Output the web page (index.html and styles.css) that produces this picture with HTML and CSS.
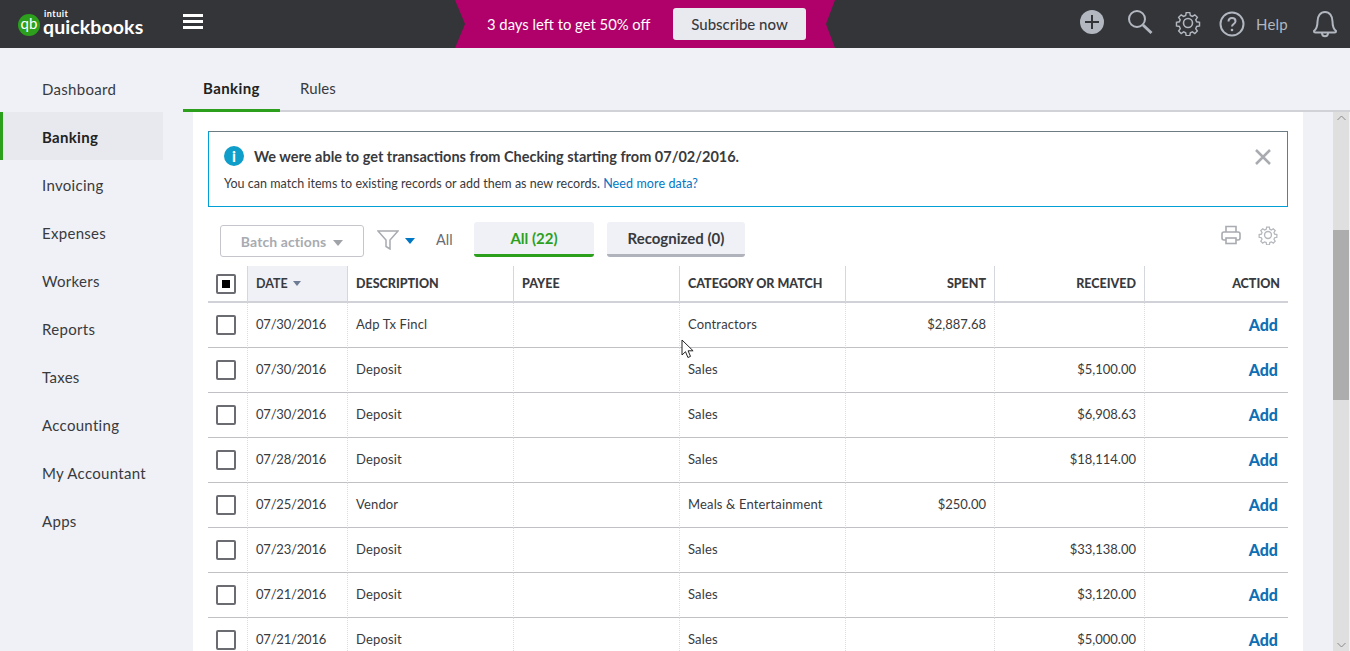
FILE: index.html
```html
<!DOCTYPE html>
<html>
<head>
    <title>Banking</title>
    <link rel="stylesheet" href="styles.css">
</head>
<body>
    <header class="topbar">
        <div class="logo">
            <span class="logo-badge">qb</span>
            <div class="logo-words">
                <span class="logo-intuit">intuit</span>
                <span class="logo-name">quickbooks</span>
            </div>
        </div>
        <div class="hamburger"><span></span><span></span><span></span></div>
        <div class="promo">
            <span class="promo-text">3 days left to get 50% off</span>
            <button class="subscribe">Subscribe now</button>
        </div>
        <div class="top-icons">
            <svg class="icon-plus" width="26" height="26" viewBox="0 0 26 26"><circle cx="13" cy="13" r="12" fill="#b2b7c0"/><path d="M13 6v14M6 13h14" stroke="#333539" stroke-width="2"/></svg>
            <svg class="icon-search" width="26" height="26" viewBox="0 0 26 26" fill="none" stroke="#b2b7c0"><circle cx="10" cy="10" r="8" stroke-width="2"/><path d="M16 16l8.500 8" stroke-width="3"/></svg>
            <svg class="icon-gear" width="26" height="26" viewBox="0 0 26 26" fill="none" stroke="#b2b7c0" stroke-width="1.600"><path d="M11 1.500h4l.6 3.200 2.300 1 2.700-1.800 2.800 2.800-1.800 2.700 1 2.300 3.200.6v4l-3.200.6-1 2.300 1.800 2.700-2.800 2.800-2.700-1.800-2.300 1-.6 3.200h-4l-.6-3.200-2.300-1-2.700 1.800-2.800-2.800 1.800-2.700-1-2.300-3.200-.6v-4l3.200-.6 1-2.300-1.800-2.700 2.800-2.800 2.700 1.800 2.300-1z" transform="translate(1.300 1.300) scale(.9)"/><circle cx="13" cy="13" r="4.500"/></svg>
            <svg class="icon-help" width="26" height="26" viewBox="0 0 26 26" fill="none" stroke="#b2b7c0"><circle cx="13" cy="13" r="11.500" stroke-width="2"/><path d="M9.500 10.500c0-2.200 1.500-3.500 3.500-3.500s3.500 1.300 3.500 3.200c0 2.800-3.500 2.800-3.500 5.300" stroke-width="2"/><circle cx="13" cy="19" r="1.300" fill="#b2b7c0" stroke="none"/></svg>
            <span class="help-label">Help</span>
            <svg class="icon-bell" width="26" height="28" viewBox="0 0 26 28" fill="none" stroke="#b2b7c0" stroke-width="2"><path d="M2 21c3-2.500 3.500-5 3.500-9.500C5.500 6 8.500 2 13 2s7.500 4 7.500 9.500c0 4.500.5 7 3.500 9.500 0 1-.5 1.500-1.500 1.500h-19C2.500 22.500 2 22 2 21z"/><path d="M10 23c0 2 1.300 3.200 3 3.200s3-1.200 3-3.200"/></svg>
        </div>
    </header>

    <div class="layout">
        <nav class="sidebar">
            <a class="nav-item">Dashboard</a>
            <a class="nav-item active">Banking</a>
            <a class="nav-item">Invoicing</a>
            <a class="nav-item">Expenses</a>
            <a class="nav-item">Workers</a>
            <a class="nav-item">Reports</a>
            <a class="nav-item">Taxes</a>
            <a class="nav-item">Accounting</a>
            <a class="nav-item">My Accountant</a>
            <a class="nav-item">Apps</a>
        </nav>

        <main class="main">
            <div class="page-tabs">
                <a class="page-tab active">Banking</a>
                <a class="page-tab">Rules</a>
            </div>
            <div class="scroll-area">
                <div class="panel">
                    <div class="notice">
                        <div class="notice-title">
                            <span class="info-icon">i</span>
                            <span>We were able to get transactions from Checking starting from 07/02/2016.</span>
                        </div>
                        <p class="notice-body">You can match items to existing records or add them as new records. <a class="link">Need more data?</a></p>
                        <svg class="notice-close" width="18" height="18" viewBox="0 0 18 18"><path d="M2 2l14 14M16 2L2 16" stroke="#a8abb0" stroke-width="2.500"/></svg>
                    </div>

                    <div class="toolbar">
                        <button class="batch">Batch actions <span class="caret-grey"></span></button>
                        <svg class="filter-icon" width="22" height="20" viewBox="0 0 22 20" fill="none"><path d="M1 1h20l-8 9v9l-4-2.500V10z" stroke="#a8abb0" stroke-width="1.500"/></svg>
                        <span class="caret-blue"></span>
                        <span class="filter-all">All</span>
                        <button class="sub-tab active">All (22)</button>
                        <button class="sub-tab sub-tab-wide">Recognized (0)</button>
                        <div class="tool-icons">
                            <svg width="20" height="20" viewBox="0 0 20 20" fill="none" stroke="#a8abb0" stroke-width="1.600"><path d="M5 7V1.500h10V7"/><rect x="1" y="7" width="18" height="8" rx="2"/><rect x="5" y="13" width="10" height="5.500" fill="#fff"/></svg>
                            <svg width="20" height="20" viewBox="0 0 26 26" fill="none" stroke="#b4b7bc" stroke-width="1.800"><path d="M11 1.500h4l.6 3.200 2.300 1 2.700-1.800 2.800 2.800-1.800 2.700 1 2.300 3.200.6v4l-3.200.6-1 2.300 1.800 2.700-2.800 2.800-2.700-1.800-2.300 1-.6 3.200h-4l-.6-3.200-2.300-1-2.700 1.800-2.800-2.800 1.800-2.700-1-2.300-3.200-.6v-4l3.200-.6 1-2.300-1.800-2.700 2.800-2.800 2.700 1.800 2.300-1z" transform="translate(1.300 1.300) scale(.9)"/><circle cx="13" cy="13" r="4.500"/></svg>
                        </div>
                    </div>

                    <table class="txn-table">
                        <colgroup>
                            <col class="col-check"><col class="col-date"><col class="col-text"><col class="col-text"><col class="col-text"><col class="col-spent"><col class="col-received"><col class="col-action">
                        </colgroup>
                        <thead>
                            <tr>
                                <th><span class="check check-some"></span></th>
                                <th class="sorted">DATE <span class="caret-sort"></span></th>
                                <th>DESCRIPTION</th>
                                <th>PAYEE</th>
                                <th>CATEGORY OR MATCH</th>
                                <th class="num">SPENT</th>
                                <th class="num">RECEIVED</th>
                                <th class="num">ACTION</th>
                            </tr>
                        </thead>
                        <tbody>
                            <tr><td><span class="check"></span></td><td class="date">07/30/2016</td><td>Adp Tx Fincl</td><td></td><td>Contractors</td><td class="num">$2,887.68</td><td class="num"></td><td class="num"><a class="add">Add</a></td></tr>
                            <tr><td><span class="check"></span></td><td class="date">07/30/2016</td><td>Deposit</td><td></td><td>Sales</td><td class="num"></td><td class="num">$5,100.00</td><td class="num"><a class="add">Add</a></td></tr>
                            <tr><td><span class="check"></span></td><td class="date">07/30/2016</td><td>Deposit</td><td></td><td>Sales</td><td class="num"></td><td class="num">$6,908.63</td><td class="num"><a class="add">Add</a></td></tr>
                            <tr><td><span class="check"></span></td><td class="date">07/28/2016</td><td>Deposit</td><td></td><td>Sales</td><td class="num"></td><td class="num">$18,114.00</td><td class="num"><a class="add">Add</a></td></tr>
                            <tr><td><span class="check"></span></td><td class="date">07/25/2016</td><td>Vendor</td><td></td><td>Meals &amp; Entertainment</td><td class="num">$250.00</td><td class="num"></td><td class="num"><a class="add">Add</a></td></tr>
                            <tr><td><span class="check"></span></td><td class="date">07/23/2016</td><td>Deposit</td><td></td><td>Sales</td><td class="num"></td><td class="num">$33,138.00</td><td class="num"><a class="add">Add</a></td></tr>
                            <tr><td><span class="check"></span></td><td class="date">07/21/2016</td><td>Deposit</td><td></td><td>Sales</td><td class="num"></td><td class="num">$3,120.00</td><td class="num"><a class="add">Add</a></td></tr>
                            <tr><td><span class="check"></span></td><td class="date">07/21/2016</td><td>Deposit</td><td></td><td>Sales</td><td class="num"></td><td class="num">$5,000.00</td><td class="num"><a class="add">Add</a></td></tr>
                        </tbody>
                    </table>
                </div>
                <div class="scrollbar">
                    <svg class="arrow" width="17" height="12" viewBox="0 0 17 12"><path d="M4.500 8l4-4 4 4" fill="none" stroke="#8a8a8a" stroke-width="1"/></svg>
                    <div class="thumb"></div>
                    <svg class="arrow arrow-down" width="17" height="12" viewBox="0 0 17 12"><path d="M4.500 4l4 4 4-4" fill="none" stroke="#8a8a8a" stroke-width="1"/></svg>
                </div>
            </div>
        </main>
    </div>

    <svg class="cursor" width="14" height="20" viewBox="0 0 14 20"><path d="M1 1v15l3.500-3.300 2.400 5.800 2.600-1.100-2.400-5.600h5z" fill="#fff" stroke="#222" stroke-width="1"/></svg>
</body>
</html>
```

FILE: styles.css
```css
* {
    box-sizing: border-box;
}
html, body {
    height: 100%;
}
body {
    margin: 0;
    height: 651px;
    overflow: hidden;
    background-color: #eff1f6;
    color: #393a3d;
    font-family: "Lato", "Open Sans", sans-serif;
    font-size: 14px;
}
button {
    font-family: inherit;
}

/* top bar */
.topbar {
    display: flex;
    align-items: center;
    height: 48px;
    background-color: #333539;
    color: #fff;
}
.logo {
    display: flex;
    align-items: center;
    width: 183px;
    padding-left: 18px;
    flex-shrink: 0;
}
.logo-badge {
    width: 22px;
    height: 22px;
    margin-top: 2px;
    border-radius: 50%;
    background-color: #2ca01c;
    color: #fff;
    font-size: 15px;
    line-height: 19px;
    text-align: center;
    margin-right: 3px;
}
.logo-words {
    display: flex;
    flex-direction: column;
    margin-top: -3px;
}
.logo-intuit {
    font-size: 9px;
    line-height: 7px;
    font-weight: 700;
    margin-left: 1px;
    letter-spacing: .5px;
}
.logo-name {
    font-size: 19.500px;
    line-height: 19px;
    font-weight: 700;
    letter-spacing: .1px;
}
.hamburger {
    display: flex;
    flex-direction: column;
    gap: 3px;
    width: 20px;
    margin-top: -5px;
}
.hamburger span {
    display: block;
    height: 3px;
    background-color: #fff;
}
.promo {
    display: flex;
    align-items: center;
    width: 380px;
    height: 48px;
    margin-left: 252px;
    padding-left: 32px;
    background-color: #b0006a;
    clip-path: polygon(0 0, 100% 0, 371px 50%, 100% 100%, 0 100%, 10px 50%);
}
.promo-text {
    font-size: 14.800px;
    width: 186px;
    color: #fff;
    margin-top: -1px;
}
.subscribe {
    width: 133px;
    height: 32px;
    border: 0;
    border-radius: 3px;
    background-color: #e9eaef;
    color: #393a3d;
    font-size: 15px;
    font-weight: 500;
}
.top-icons {
    display: flex;
    align-items: center;
    margin-left: 244px;
}
.icon-plus {
    margin-top: -4px;
}
.icon-search {
    margin: -4px 0 0 22px;
}
.icon-gear {
    margin: -3px 0 0 22px;
}
.icon-help {
    margin: 0 0 0 18px;
}
.help-label {
    color: #b2b7c0;
    font-size: 15px;
    margin: -1px 0 0 11px;
    width: 45px;
    letter-spacing: .2px;
}
.icon-bell {
    margin: 0 0 0 11px;
}

/* sidebar */
.layout {
    display: flex;
    height: 603px;
}
.sidebar {
    width: 183px;
    padding-top: 16px;
    flex-shrink: 0;
}
.nav-item {
    display: block;
    width: 163px;
    height: 48px;
    padding-left: 42px;
    line-height: 50px;
    font-size: 15px;
    letter-spacing: .3px;
}
.nav-item.active {
    padding-left: 39px;
    border-left: 3px solid #2ca01c;
    background-color: #e8e9ee;
    font-weight: 700;
    color: #222;
}

/* main */
.main {
    flex: 1;
    display: flex;
    flex-direction: column;
    min-width: 0;
}
.page-tabs {
    display: flex;
    height: 64px;
    border-bottom: 2px solid #d0d2d8;
}
.page-tab {
    height: 64px;
    padding: 31px 20px 0;
    font-size: 15px;
    letter-spacing: .1px;
}
.page-tab.active {
    width: 97px;
    border-bottom: 3px solid #2ca01c;
    font-weight: 700;
    color: #222;
    letter-spacing: .4px;
}
.scroll-area {
    flex: 1;
    display: flex;
    min-height: 0;
    padding-left: 10px;
}
.panel {
    width: 1110px;
    padding: 19px 15px 0;
    background-color: #fff;
    overflow: hidden;
}
.scrollbar {
    display: flex;
    flex-direction: column;
    width: 16px;
    margin-left: 30px;
    background-color: #dfdfdf;
    position: relative;
}
.arrow {
    flex-shrink: 0;
}
.arrow-down {
    margin-top: auto;
}
.thumb {
    position: absolute;
    top: 118px;
    left: 0;
    width: 100%;
    height: 170px;
    background-color: #adadad;
}

/* notice */
.notice {
    position: relative;
    height: 76px;
    padding: 14px 15px 0;
    border: 1px solid #00a0d6;
    border-top-color: #6d7b82;
}
.notice-title {
    display: flex;
    align-items: center;
    font-size: 14.500px;
    font-weight: 700;
}
.info-icon {
    width: 20px;
    height: 20px;
    margin-right: 10px;
    border-radius: 50%;
    background-color: #0f9dc9;
    color: #fff;
    font-size: 15px;
    font-weight: 900;
    line-height: 20px;
    text-align: center;
}
.notice-body {
    margin: 10px 0 0;
    font-size: 12.500px;
    letter-spacing: .03px;
}
.link {
    color: #0077c5;
    letter-spacing: .1px;
}
.notice-close {
    position: absolute;
    top: 16px;
    right: 15px;
}

/* toolbar above table */
.toolbar {
    display: flex;
    align-items: center;
    height: 35px;
    margin-top: 15px;
    padding-left: 12px;
}
.batch {
    display: flex;
    align-items: center;
    justify-content: center;
    width: 144px;
    height: 32px;
    margin-top: 2px;
    padding: 2px 0 0;
    background-color: #fff;
    border: 1px solid #c4c6cc;
    border-radius: 3px;
    color: #a8abb0;
    font-size: 14px;
    font-weight: 700;
    letter-spacing: .1px;
}
.caret-grey {
    width: 0;
    height: 0;
    margin-left: 7px;
    margin-top: 3px;
    border-left: 5px solid transparent;
    border-right: 5px solid transparent;
    border-top: 6px solid #a0a3a8;
}
.filter-icon {
    margin-left: 13px;
}
.caret-blue {
    width: 0;
    height: 0;
    margin-left: 6px;
    margin-top: 3px;
    border-left: 5px solid transparent;
    border-right: 5px solid transparent;
    border-top: 6px solid #0077c5;
}
.filter-all {
    width: 59px;
    padding-left: 21px;
    color: #6b6c72;
    font-size: 14.500px;
}
.sub-tab {
    width: 120px;
    height: 35px;
    margin-right: 13px;
    padding: 0;
    border: 0;
    border-bottom: 3px solid #b0b3bc;
    border-radius: 3px;
    background-color: #eff1f6;
    color: #393a3d;
    font-size: 15px;
    font-weight: 700;
}
.sub-tab.active {
    border-bottom-color: #2ca01c;
    color: #2ca01c;
}
.sub-tab-wide {
    width: 138px;
}
.tool-icons {
    display: flex;
    gap: 17px;
    margin-left: auto;
    margin-top: -9px;
    padding-right: 10px;
}

/* table */
.txn-table {
    width: 1080px;
    margin-top: 9px;
    table-layout: fixed;
    border-collapse: separate;
    border-spacing: 0;
}
.col-check { width: 40px; }
.col-date { width: 100px; }
.col-text { width: 166px; }
.col-spent { width: 149px; }
.col-received { width: 150px; }
.col-action { width: 143px; }
.txn-table th {
    height: 37px;
    padding: 0 8px;
    border-bottom: 2px solid #d0d2d8;
    border-right: 1px solid #d4d7dc;
    color: #393a3d;
    font-size: 12.500px;
    font-weight: 900;
    text-align: left;
}
.txn-table th:last-child,
.txn-table td:last-child {
    border-right: 0;
}
.txn-table th.sorted {
    background-color: #eff1f6;
    font-weight: 700;
}
.txn-table th.num,
.txn-table td.num {
    text-align: right;
}
.txn-table td {
    height: 45px;
    padding: 0 8px 2px;
    border-bottom: 1px solid #bfc1c5;
    border-right: 1px dotted #dcdde0;
    font-size: 13px;
    letter-spacing: .15px;
}
.txn-table td.num {
    letter-spacing: 0;
}
.txn-table td.date {
    letter-spacing: -.2px;
}
.txn-table td:last-child {
    padding-right: 10px;
}
.caret-sort {
    display: inline-block;
    width: 0;
    height: 0;
    margin: 0 0 2px 2px;
    border-left: 4px solid transparent;
    border-right: 4px solid transparent;
    border-top: 5px solid #6d7b95;
}
.check {
    display: block;
    width: 20px;
    height: 20px;
    border: 2px solid #6b6c72;
    border-radius: 2px;
    background-color: #fff;
}
td .check {
    margin-top: 2px;
}
.check-some {
    padding: 3px;
}
.check-some::after {
    content: "";
    display: block;
    width: 8px;
    height: 8px;
    margin: 1px;
    background-color: #000;
}
.txn-table td .add {
    color: #0f6fb5;
    font-size: 16px;
    font-weight: 900;
}

/* mouse pointer caught in the picture */
.cursor {
    position: absolute;
    left: 681px;
    top: 339px;
}
```
